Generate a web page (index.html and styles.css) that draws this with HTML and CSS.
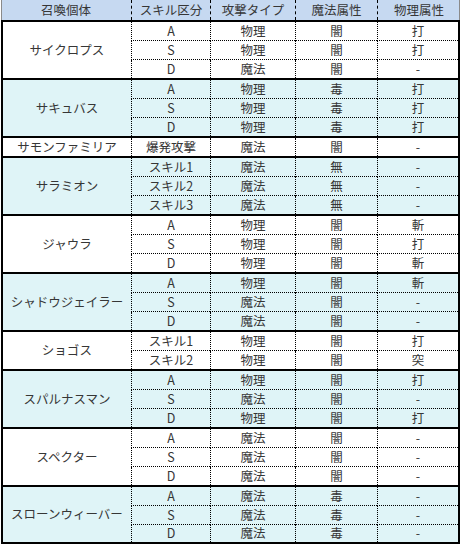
FILE: index.html
```html
<!DOCTYPE html>
<html lang="ja">
<head>
<meta charset="utf-8">
<link rel="stylesheet" href="styles.css">
</head>
<body>
<div class="sheet">
  <div class="head">
    <div class="hc">召喚個体</div>
    <div class="hc sep">スキル区分</div>
    <div class="hc sep">攻撃タイプ</div>
    <div class="hc sep">魔法属性</div>
    <div class="hc sep">物理属性</div>
  </div>
  <div class="body">
    <div class="group">
      <div class="name r3">サイクロプス</div>
      <div class="c">A</div><div class="c">物理</div><div class="c">闇</div><div class="c">打</div>
      <div class="c">S</div><div class="c">物理</div><div class="c">闇</div><div class="c">打</div>
      <div class="c last">D</div><div class="c last">魔法</div><div class="c last">闇</div><div class="c last">-</div>
    </div>
    <div class="group alt">
      <div class="name r3">サキュバス</div>
      <div class="c">A</div><div class="c">物理</div><div class="c">毒</div><div class="c">打</div>
      <div class="c">S</div><div class="c">物理</div><div class="c">毒</div><div class="c">打</div>
      <div class="c last">D</div><div class="c last">物理</div><div class="c last">毒</div><div class="c last">打</div>
    </div>
    <div class="group">
      <div class="name r1">サモンファミリア</div>
      <div class="c last">爆発攻撃</div><div class="c last">魔法</div><div class="c last">闇</div><div class="c last">-</div>
    </div>
    <div class="group alt">
      <div class="name r3">サラミオン</div>
      <div class="c">スキル1</div><div class="c">魔法</div><div class="c">無</div><div class="c">-</div>
      <div class="c">スキル2</div><div class="c">魔法</div><div class="c">無</div><div class="c">-</div>
      <div class="c last">スキル3</div><div class="c last">魔法</div><div class="c last">無</div><div class="c last">-</div>
    </div>
    <div class="group">
      <div class="name r3">ジャウラ</div>
      <div class="c">A</div><div class="c">物理</div><div class="c">闇</div><div class="c">斬</div>
      <div class="c">S</div><div class="c">物理</div><div class="c">闇</div><div class="c">打</div>
      <div class="c last">D</div><div class="c last">物理</div><div class="c last">闇</div><div class="c last">斬</div>
    </div>
    <div class="group alt">
      <div class="name r3">シャドウジェイラー</div>
      <div class="c">A</div><div class="c">物理</div><div class="c">闇</div><div class="c">斬</div>
      <div class="c">S</div><div class="c">魔法</div><div class="c">闇</div><div class="c">-</div>
      <div class="c last">D</div><div class="c last">魔法</div><div class="c last">闇</div><div class="c last">-</div>
    </div>
    <div class="group">
      <div class="name r2">ショゴス</div>
      <div class="c">スキル1</div><div class="c">物理</div><div class="c">闇</div><div class="c">打</div>
      <div class="c last">スキル2</div><div class="c last">物理</div><div class="c last">闇</div><div class="c last">突</div>
    </div>
    <div class="group alt">
      <div class="name r3">スパルナスマン</div>
      <div class="c">A</div><div class="c">物理</div><div class="c">闇</div><div class="c">打</div>
      <div class="c">S</div><div class="c">魔法</div><div class="c">闇</div><div class="c">-</div>
      <div class="c last">D</div><div class="c last">物理</div><div class="c last">闇</div><div class="c last">打</div>
    </div>
    <div class="group">
      <div class="name r3">スペクター</div>
      <div class="c">A</div><div class="c">魔法</div><div class="c">闇</div><div class="c">-</div>
      <div class="c">S</div><div class="c">魔法</div><div class="c">闇</div><div class="c">-</div>
      <div class="c last">D</div><div class="c last">魔法</div><div class="c last">闇</div><div class="c last">-</div>
    </div>
    <div class="group alt">
      <div class="name r3">スローンウィーバー</div>
      <div class="c">A</div><div class="c">魔法</div><div class="c">毒</div><div class="c">-</div>
      <div class="c">S</div><div class="c">魔法</div><div class="c">毒</div><div class="c">-</div>
      <div class="c last">D</div><div class="c last">魔法</div><div class="c last">毒</div><div class="c last">-</div>
    </div>
  </div>
</div>
</body>
</html>
```

FILE: styles.css
```css
html, body {
  margin: 0;
  padding: 0;
  background: #ffffff;
}
body {
  font-family: "Noto Sans CJK JP", "Noto Sans", sans-serif;
  font-size: 12.5px;
  color: #363636;
}
.sheet {
  margin-left: 1px;
  width: 459px;
}
.head {
  display: grid;
  grid-template-columns: 130px 79px 85px 82px 1fr;
  height: 20px;
  background: #c6d9f1;
  border-bottom: 2px solid #000;
  box-shadow: inset 1px 0 0 #8a8a8a, inset -1px 0 0 #8a8a8a;
}
.hc {
  display: flex;
  align-items: center;
  justify-content: center;
  line-height: 1;
}
.hc.sep {
  border-left: 1px dashed #000;
}
.body {
  border-left: 2px solid #000;
  border-right: 2px solid #000;
}
.group {
  display: grid;
  grid-template-columns: 128px 79px 85px 82px 1fr;
  grid-auto-rows: auto;
  border-bottom: 2px solid #000;
  background: #ffffff;
}
.group.alt {
  background: #dff4f7;
}
.group:last-child .c.last {
  height: 17px;
}
.name {
  grid-column: 1;
  display: flex;
  align-items: center;
  justify-content: center;
  line-height: 1;
}
.name.r1 { grid-row: 1 / span 1; }
.name.r2 { grid-row: 1 / span 2; }
.name.r3 { grid-row: 1 / span 3; }
.c {
  height: 18px;
  display: flex;
  align-items: center;
  justify-content: center;
  line-height: 1;
  border-left: 1px dotted #000;
  border-bottom: 1px dotted #000;
}
.c.last {
  border-bottom: none;
}
```
